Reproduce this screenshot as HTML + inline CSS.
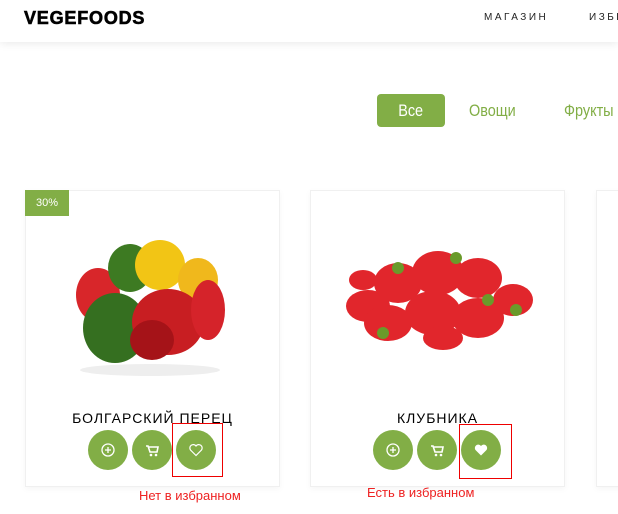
<!DOCTYPE html>
<html><head><meta charset="utf-8"><style>
*{margin:0;padding:0;box-sizing:border-box}
html,body{width:618px;height:514px;overflow:hidden}
body{background:#fff;font-family:"Liberation Sans",sans-serif;position:relative}
.hdr{position:absolute;left:0;top:0;width:618px;height:42px;background:#fff;box-shadow:0 2px 8px rgba(0,0,0,.08);overflow:hidden}
.logo{position:absolute;left:24px;top:8px;font-weight:900;font-size:18px;letter-spacing:0.8px;color:#000;-webkit-text-stroke:0.6px #000}
.nav{position:absolute;top:12px;font-size:10px;letter-spacing:2.5px;color:#222;white-space:nowrap}
.tab{position:absolute;top:94px;height:33px;line-height:33px;font-size:17px;color:#82ae46;white-space:nowrap}
.tab span{display:inline-block;transform:scaleX(0.85);transform-origin:left}
.card{position:absolute;top:190px;width:255px;height:297px;border:1px solid #f0f0f0;background:#fff;box-shadow:0 2px 6px rgba(0,0,0,.04)}
.badge{position:absolute;left:25px;top:190px;width:44px;height:26px;background:#82ae46;color:#fff;font-size:11px;line-height:26px;text-align:center}
.title{position:absolute;top:410px;font-size:14px;letter-spacing:1px;color:#000;text-align:center;width:255px}
.btn{position:absolute;top:430px;width:40px;height:40px;border-radius:50%;background:#82ae46}
.btn svg{position:absolute;left:12px;top:12px}
.rb{position:absolute;border:1px solid #e00}
.lbl{position:absolute;color:#e22;font-size:13px}
</style></head><body>
<div class="hdr"><div class="logo">VEGEFOODS</div>
<div class="nav" style="left:484px">МАГАЗИН</div><div class="nav" style="left:589px">ИЗБРАННОЕ</div></div>

<div class="tab" style="left:377px;width:68px;background:#82ae46;color:#fff;border-radius:4px;text-align:center"><span style="transform-origin:center">Все</span></div>
<div class="tab" style="left:469px"><span>Овощи</span></div>
<div class="tab" style="left:564px"><span>Фрукты</span></div>

<div class="card" style="left:25px"></div>
<div class="card" style="left:310px"></div>
<div class="card" style="left:596px"></div>
<div class="badge">30%</div>

<svg style="position:absolute;left:60px;top:230px" width="180" height="150">
<ellipse cx="90" cy="140" rx="70" ry="6" fill="#eee"/>
<ellipse cx="38" cy="65" rx="22" ry="27" fill="#d8262a"/>
<ellipse cx="70" cy="38" rx="22" ry="24" fill="#3d7a22"/>
<ellipse cx="100" cy="35" rx="25" ry="25" fill="#f2c515"/>
<ellipse cx="138" cy="50" rx="20" ry="22" fill="#f0b81c"/>
<ellipse cx="55" cy="98" rx="32" ry="35" fill="#356f20"/>
<ellipse cx="108" cy="92" rx="36" ry="33" fill="#c81e22"/>
<ellipse cx="148" cy="80" rx="17" ry="30" fill="#d5232a"/>
<ellipse cx="92" cy="110" rx="22" ry="20" fill="#a51318"/>
</svg>

<svg style="position:absolute;left:338px;top:238px" width="200" height="120">
<g fill="#e1262c">
<ellipse cx="30" cy="68" rx="22" ry="16"/><ellipse cx="60" cy="45" rx="24" ry="20"/>
<ellipse cx="100" cy="35" rx="26" ry="22"/><ellipse cx="140" cy="40" rx="24" ry="20"/>
<ellipse cx="175" cy="62" rx="20" ry="16"/><ellipse cx="50" cy="85" rx="24" ry="18"/>
<ellipse cx="95" cy="75" rx="28" ry="22"/><ellipse cx="140" cy="80" rx="26" ry="20"/>
<ellipse cx="105" cy="100" rx="20" ry="12"/><ellipse cx="25" cy="42" rx="14" ry="10"/>
</g>
<g fill="#6a9a2a"><circle cx="60" cy="30" r="6"/><circle cx="118" cy="20" r="6"/><circle cx="150" cy="62" r="6"/><circle cx="45" cy="95" r="6"/><circle cx="178" cy="72" r="6"/></g>
</svg>

<div class="title" style="left:25px">БОЛГАРСКИЙ ПЕРЕЦ</div>
<div class="title" style="left:310px">КЛУБНИКА</div>

<div class="btn" style="left:88px"><svg width="16" height="16"><circle cx="8" cy="8" r="6" fill="none" stroke="#fff" stroke-width="1.3"/><path d="M8 5v6M5 8h6" stroke="#fff" stroke-width="1.3"/></svg></div>
<div class="btn" style="left:132px"><svg width="16" height="16"><path d="M2 4h2l2 6h7l1-5H5" fill="none" stroke="#fff" stroke-width="1.6"/><circle cx="7" cy="13" r="1.3" fill="#fff"/><circle cx="12" cy="13" r="1.3" fill="#fff"/></svg></div>
<div class="btn" style="left:176px"><svg width="16" height="16"><path d="M8 13.5L2.5 8A3 3 0 0 1 8 4a3 3 0 0 1 5.5 4z" fill="none" stroke="#fff" stroke-width="1.2"/></svg></div>

<div class="btn" style="left:373px"><svg width="16" height="16"><circle cx="8" cy="8" r="6" fill="none" stroke="#fff" stroke-width="1.3"/><path d="M8 5v6M5 8h6" stroke="#fff" stroke-width="1.3"/></svg></div>
<div class="btn" style="left:417px"><svg width="16" height="16"><path d="M2 4h2l2 6h7l1-5H5" fill="none" stroke="#fff" stroke-width="1.6"/><circle cx="7" cy="13" r="1.3" fill="#fff"/><circle cx="12" cy="13" r="1.3" fill="#fff"/></svg></div>
<div class="btn" style="left:461px"><svg width="16" height="16"><path d="M8 13.5L2.5 8A3 3 0 0 1 8 4a3 3 0 0 1 5.5 4z" fill="#fff"/></svg></div>

<div class="rb" style="left:172px;top:423px;width:51px;height:54px"></div>
<div class="rb" style="left:459px;top:424px;width:53px;height:55px"></div>
<div class="lbl" style="left:139px;top:488px">Нет в избранном</div>
<div class="lbl" style="left:367px;top:485px">Есть в избранном</div>
</body></html>
